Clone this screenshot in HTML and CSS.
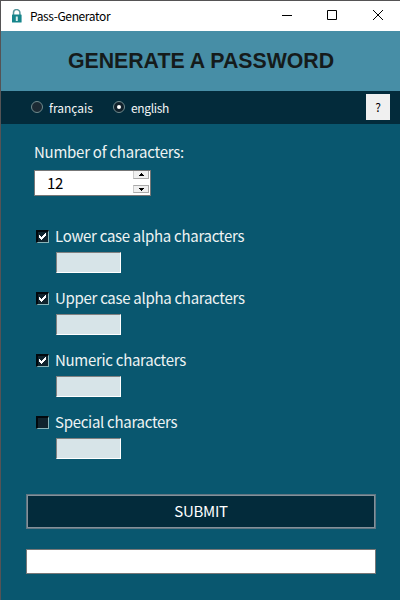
FILE: index.html
```html
<!DOCTYPE html>
<html lang="en">
<head>
<meta charset="utf-8">
<title>Pass-Generator</title>
<link rel="stylesheet" href="styles.css">
</head>
<body>
<div class="window">
  <div class="titlebar">
    <svg class="lock" width="12" height="14" viewBox="0 0 12 14"><path d="M2.5 6V3.8a3.2 3.2 0 0 1 6.4 0V6" fill="none" stroke="#55969c" stroke-width="1.5"/><rect x="1" y="5.5" width="9.6" height="8" rx=".6" fill="#16858b"/><path d="M4.8 7.5h2v4.5h-2z" fill="#d8eeee"/></svg>
    <span class="app-name">Pass-Generator</span>
    <svg class="controls" width="106" height="12" viewBox="0 0 106 12" fill="none" stroke="#000"><path d="M1 6.5h10M46.500 1.500h9v9h-9zM92 1l10 10M102 1L92 11"/></svg>
  </div>
  <header class="header"><h1>GENERATE A PASSWORD</h1></header>
  <nav class="languages">
    <label class="lang french"><i class="radio"></i><span>français</span></label>
    <label class="lang english"><i class="radio selected"></i><span>english</span></label>
    <button class="help">?</button>
  </nav>
  <main class="form">
    <div class="count-label"><span>Number of characters:</span></div>
    <div class="spinbox">
      <span class="value">12</span>
      <div class="arrows">
        <span class="arrow up"><svg width="5" height="3" viewBox="0 0 5 3" shape-rendering="crispEdges"><path d="M2 0h1v1h1v1h1v1H0V2h1V1h1z"/></svg></span>
        <span class="arrow down"><svg width="5" height="3" viewBox="0 0 5 3" shape-rendering="crispEdges"><path d="M0 0h5v1H4v1H3v1H2V2H1V1H0z"/></svg></span>
      </div>
    </div>
    <div class="options">
      <div class="option"><div class="option-label"><i class="check"><svg width="9" height="9" viewBox="0 0 9 9" shape-rendering="crispEdges"><path d="M1 3h1v1h1v1h1V4h1V3h1V2h1V1h1v3H7v1H6v1H5v1H4v1H3V7H2V6H1z" fill="#fff"/></svg></i><span>Lower case alpha characters</span></div><div class="field"></div></div>
      <div class="option"><div class="option-label"><i class="check"><svg width="9" height="9" viewBox="0 0 9 9" shape-rendering="crispEdges"><path d="M1 3h1v1h1v1h1V4h1V3h1V2h1V1h1v3H7v1H6v1H5v1H4v1H3V7H2V6H1z" fill="#fff"/></svg></i><span>Upper case alpha characters</span></div><div class="field"></div></div>
      <div class="option"><div class="option-label"><i class="check"><svg width="9" height="9" viewBox="0 0 9 9" shape-rendering="crispEdges"><path d="M1 3h1v1h1v1h1V4h1V3h1V2h1V1h1v3H7v1H6v1H5v1H4v1H3V7H2V6H1z" fill="#fff"/></svg></i><span>Numeric characters</span></div><div class="field"></div></div>
      <div class="option"><div class="option-label"><i class="check"></i><span>Special characters</span></div><div class="field"></div></div>
    </div>
    <button class="submit"><span>SUBMIT</span></button>
    <div class="result"></div>
  </main>
</div>
</body>
</html>
```
FILE: styles.css
```css
* { box-sizing: border-box; }
body { margin: 0; font-family: "Noto Sans CJK SC", "Noto Sans", sans-serif; }
svg { display: block; flex: none; }
button { font-family: inherit; padding: 0; margin: 0; border-radius: 0; }
.window { width: 400px; height: 600px; overflow: hidden; border-left: 1px solid #555355; border-top: 1px solid #555355; background: #09576f; }
.titlebar { height: 30px; background: #fff; display: flex; align-items: center; padding: 0 13px 0 11px; }
.lock { margin: 0 0 1px -1px; }
.app-name { font-size: 12px; line-height: 18px; letter-spacing: -.37px; color: #000; margin-left: 7px; }
.controls { margin: 0 0 2px auto; }
.header { height: 60px; background: #478ea6; display: flex; align-items: center; justify-content: center; }
.header h1 { margin: 0; padding-left: 1px; font: bold 21.300px/30px "Liberation Sans", Arial, sans-serif; color: #151b1b; white-space: nowrap; }
.languages { height: 33px; background: #032b3b; display: flex; align-items: center; padding: 0 10px 0 30px; }
.lang { display: flex; align-items: center; gap: 6px; color: #f4f6f6; font-size: 12px; line-height: 18px; }
.french { width: 82px; }
.english { letter-spacing: -.35px; }
.radio { width: 12px; height: 12px; margin-top: -1px; border-radius: 50%; background: #1b2a34; border: 1px solid #708a8d; display: flex; align-items: center; justify-content: center; }
.selected { background: #10202a; }
.selected::after { content: ""; width: 4px; height: 4px; border-radius: 50%; background: #fff; }
.help { width: 24px; height: 26px; margin-left: auto; margin-bottom: 1px; background: #f0f0f0; border: 0; font-size: 12px; line-height: 18px; color: #000; }
.form { padding: 16px 24px 0 25px; }
.count-label { height: 24px; margin-left: 8px; color: #eef3f3; font-size: 15px; letter-spacing: -.25px; line-height: 24px; }
.spinbox { width: 117px; height: 26px; margin: 6px 0 0 8px; border: 1px solid #777; background: #fff; display: flex; align-items: center; justify-content: space-between; padding: 0 1px 0 12px; }
.value { font-size: 15px; line-height: 24px; margin-top: -1px; letter-spacing: -.3px; color: #000; }
.arrows { height: 24px; display: flex; flex-direction: column; justify-content: space-between; padding-bottom: 2px; }
.arrow { width: 16px; height: 8px; background: #f0f0f0; border: 1px solid #aaa; border-left-color: #ccc; display: flex; align-items: center; justify-content: center; }
.up { border-top: 0; }
.options { margin: 28px 0 0 10px; }
.option { height: 62px; }
.option-label { display: flex; align-items: center; height: 24px; gap: 6px; color: #eef3f3; font-size: 15px; letter-spacing: -.29px; line-height: 24px; white-space: nowrap; }
.check { width: 13px; height: 13px; margin-top: 1px; border: 2px solid #02080d; border-right: 1px solid #8ab4b8; border-bottom: 1px solid #8ab4b8; background: #10242e; }
.field { width: 65px; height: 21px; margin: 4px 0 0 20px; background: #d7e4e8; border: 1px solid #808080; border-right-color: #fff; border-bottom-color: #fff; }
.submit { width: 350px; height: 35px; margin-top: 22px; background: #032b3b; border: 1px solid #5f7683; box-shadow: inset 0 0 0 1px #84919a; color: #fff; font-size: 15px; letter-spacing: -.3px; line-height: 24px; display: flex; align-items: center; justify-content: center; padding-bottom: 1px; }
.result { width: 350px; height: 25px; margin-top: 20px; background: #fff; border: 1px solid #777; }
```
